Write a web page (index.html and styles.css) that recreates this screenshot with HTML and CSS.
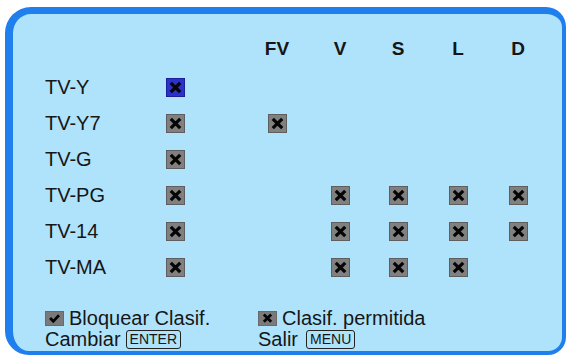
FILE: index.html
```html
<!DOCTYPE html>
<html>
<head>
<meta charset="utf-8">
<link rel="stylesheet" href="styles.css">
</head>
<body>
<div class="frame">
  <div class="grid">
    <div></div><div></div>
    <div class="cell head">FV</div><div class="cell head">V</div><div class="cell head">S</div><div class="cell head">L</div><div class="cell head">D</div>

    <div class="label">TV-Y</div>
    <div class="cell"><span class="box sel"><svg viewBox="0 0 18 18"><path d="M4 4L14 14M14 4L4 14"/></svg></span></div>
    <div></div><div></div><div></div><div></div><div></div>

    <div class="label">TV-Y7</div>
    <div class="cell"><span class="box"><svg viewBox="0 0 18 18"><path d="M4 4L14 14M14 4L4 14"/></svg></span></div>
    <div class="cell"><span class="box"><svg viewBox="0 0 18 18"><path d="M4 4L14 14M14 4L4 14"/></svg></span></div>
    <div></div><div></div><div></div><div></div>

    <div class="label">TV-G</div>
    <div class="cell"><span class="box"><svg viewBox="0 0 18 18"><path d="M4 4L14 14M14 4L4 14"/></svg></span></div>
    <div></div><div></div><div></div><div></div><div></div>

    <div class="label">TV-PG</div>
    <div class="cell"><span class="box"><svg viewBox="0 0 18 18"><path d="M4 4L14 14M14 4L4 14"/></svg></span></div>
    <div></div>
    <div class="cell"><span class="box"><svg viewBox="0 0 18 18"><path d="M4 4L14 14M14 4L4 14"/></svg></span></div>
    <div class="cell"><span class="box"><svg viewBox="0 0 18 18"><path d="M4 4L14 14M14 4L4 14"/></svg></span></div>
    <div class="cell"><span class="box"><svg viewBox="0 0 18 18"><path d="M4 4L14 14M14 4L4 14"/></svg></span></div>
    <div class="cell"><span class="box"><svg viewBox="0 0 18 18"><path d="M4 4L14 14M14 4L4 14"/></svg></span></div>

    <div class="label">TV-14</div>
    <div class="cell"><span class="box"><svg viewBox="0 0 18 18"><path d="M4 4L14 14M14 4L4 14"/></svg></span></div>
    <div></div>
    <div class="cell"><span class="box"><svg viewBox="0 0 18 18"><path d="M4 4L14 14M14 4L4 14"/></svg></span></div>
    <div class="cell"><span class="box"><svg viewBox="0 0 18 18"><path d="M4 4L14 14M14 4L4 14"/></svg></span></div>
    <div class="cell"><span class="box"><svg viewBox="0 0 18 18"><path d="M4 4L14 14M14 4L4 14"/></svg></span></div>
    <div class="cell"><span class="box"><svg viewBox="0 0 18 18"><path d="M4 4L14 14M14 4L4 14"/></svg></span></div>

    <div class="label">TV-MA</div>
    <div class="cell"><span class="box"><svg viewBox="0 0 18 18"><path d="M4 4L14 14M14 4L4 14"/></svg></span></div>
    <div></div>
    <div class="cell"><span class="box"><svg viewBox="0 0 18 18"><path d="M4 4L14 14M14 4L4 14"/></svg></span></div>
    <div class="cell"><span class="box"><svg viewBox="0 0 18 18"><path d="M4 4L14 14M14 4L4 14"/></svg></span></div>
    <div class="cell"><span class="box"><svg viewBox="0 0 18 18"><path d="M4 4L14 14M14 4L4 14"/></svg></span></div>
    <div></div>
  </div>

  <div class="legend">
    <div class="item"><span class="box small"><svg viewBox="0 0 18 16"><path d="M3.5 7.5L7.5 11.5L14.5 4"/></svg></span>Bloquear Clasif.</div>
    <div class="item"><span class="box small"><svg viewBox="0 0 18 16"><path d="M4.5 3L13.5 12M13.5 3L4.5 12"/></svg></span>Clasif. permitida</div>
    <div class="item">Cambiar <span class="key">ENTER</span></div>
    <div class="item">Salir <span class="key menu">MENU</span></div>
  </div>
</div>
</body>
</html>
```

FILE: styles.css
```css
* { box-sizing: border-box; }
html, body { margin: 0; padding: 0; background: #ffffff; }
body {
  width: 566px;
  height: 358px;
  overflow: hidden;
  font-family: "Liberation Sans", Arial, sans-serif;
  color: #161616;
}
.frame {
  margin: 7px 0 0 5px;
  width: 561px;
  height: 348px;
  background: #afe3fb;
  border-style: solid;
  border-color: #1f7fec;
  border-width: 7px 4px 4px 8px;
  border-radius: 26px 20px 18px 24px;
  padding: 15px 0 0 32px;
}
.grid {
  display: grid;
  grid-template-columns: 120px 20px 102px 63px 58px 60px 60px;
  grid-template-rows: 40px repeat(6, 36px);
  align-items: center;
}
.label {
  font-size: 20px;
  line-height: 22px;
}
.cell {
  width: 20px;
  justify-self: end;
  display: flex;
  justify-content: center;
  align-items: center;
}
.head {
  font-size: 19px;
  font-weight: bold;
  line-height: 22px;
  white-space: nowrap;
}
.box {
  display: inline-flex;
  width: 19px;
  height: 19px;
  background: #808080;
  border: 1px solid #5e5e5e;
}
.box svg { width: 100%; height: 100%; display: block; }
.box svg path {
  fill: none;
  stroke: #050505;
  stroke-width: 3.4;
}
.box.sel {
  background: #2b30cf;
  border-color: #1b1f9a;
}
.legend {
  margin-top: 23px;
  display: grid;
  grid-template-columns: 213px auto;
  font-size: 20px;
  line-height: 21px;
}
.item {
  display: flex;
  align-items: center;
  white-space: nowrap;
}
.box.small {
  width: 19px;
  height: 15px;
  margin-right: 5px;
  background: #7a7a7a;
  border-color: #6a6a6a;
}
.key {
  display: inline-block;
  margin-left: 5px;
  font-size: 14px;
  line-height: 15px;
  padding: 1px 3px;
  border: 1.5px solid #222222;
  border-radius: 3px;
}
.key.menu { margin-left: 8px; }
```
